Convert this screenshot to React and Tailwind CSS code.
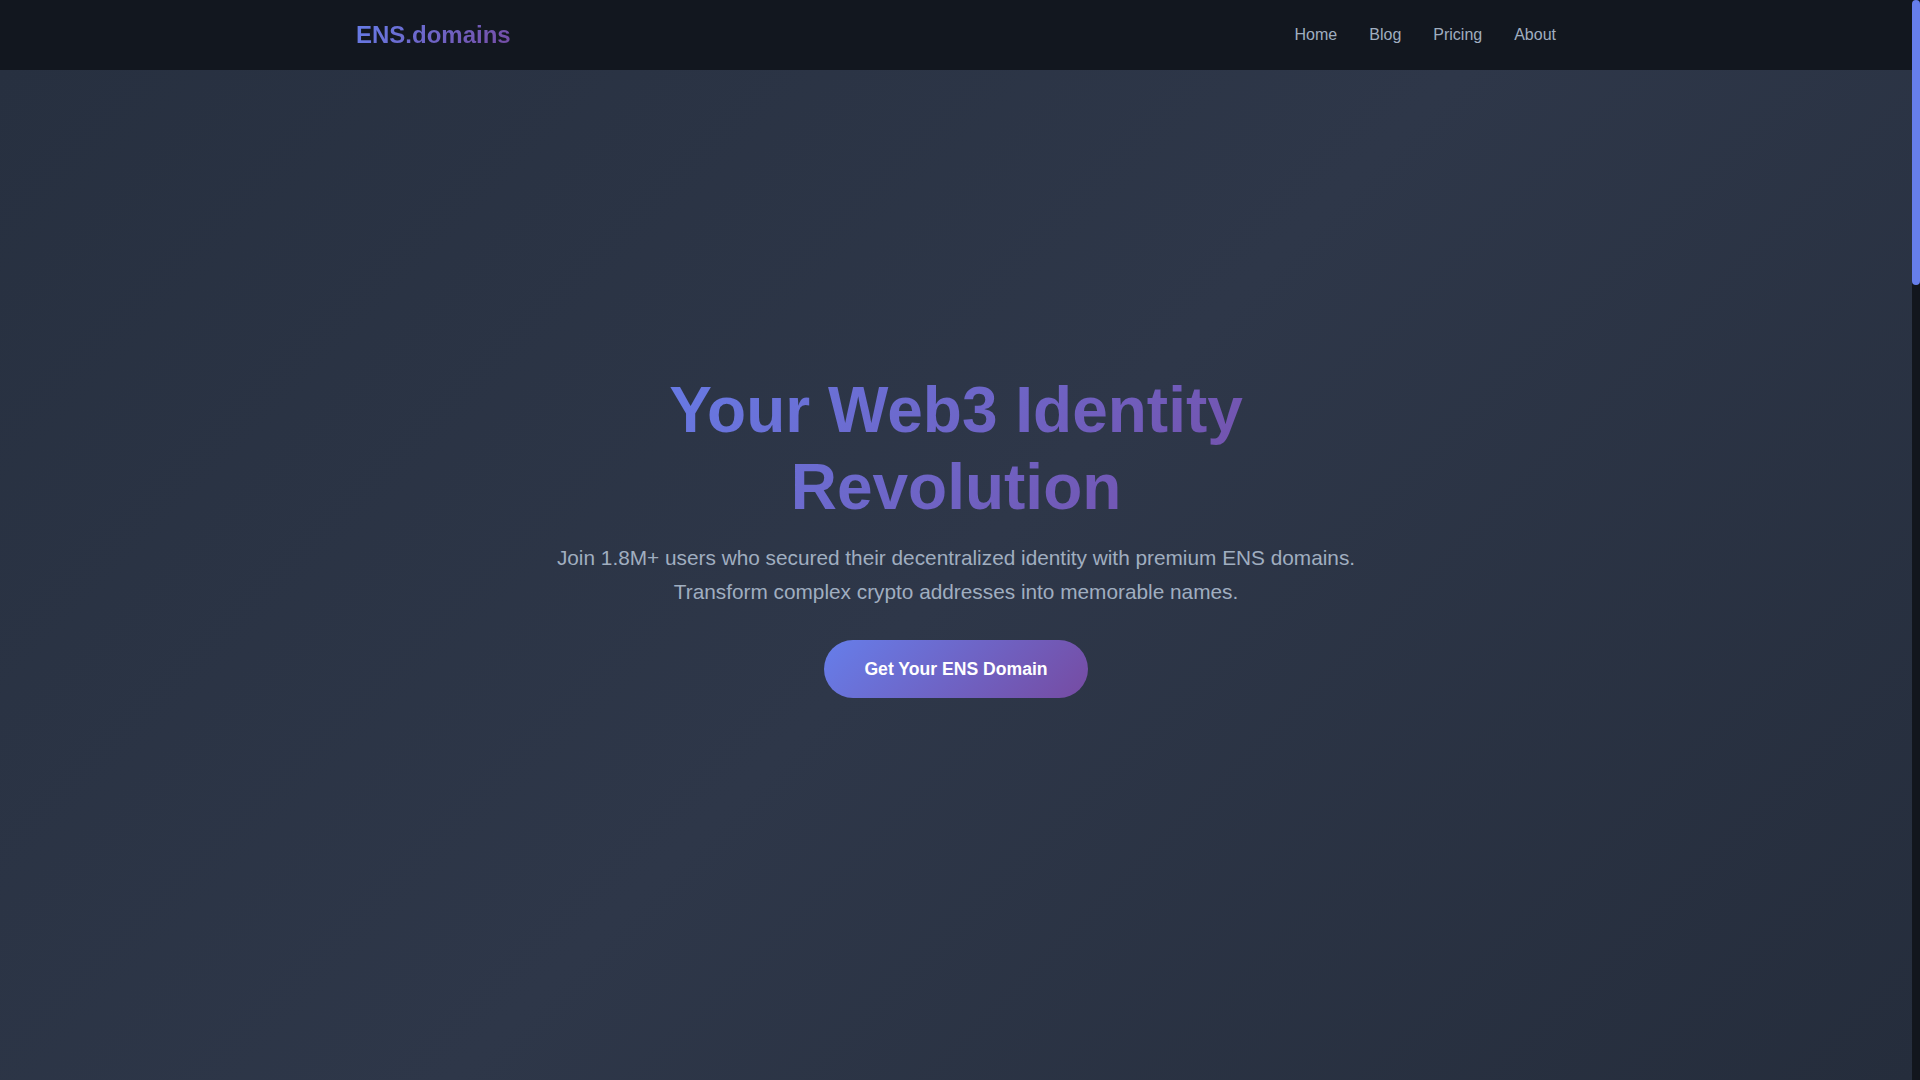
export default function App() {
  return (
    <div className="flex h-screen overflow-hidden bg-[#1a202c] font-['Liberation_Sans',Arial,sans-serif]">
      <div className="min-w-0 flex-1">
        <header className="h-[70px] bg-[#12171f]">
          <div className="mx-auto flex h-full max-w-[1200px] items-center justify-between">
            <a className="bg-[linear-gradient(135deg,#667eea_0%,#764ba2_100%)] bg-clip-text text-2xl font-bold text-transparent">
              ENS.domains
            </a>
            <nav className="flex items-center gap-8 text-base text-[#a0aec0]">
              <a>Home</a>
              <a>Blog</a>
              <a>Pricing</a>
              <a>About</a>
            </nav>
          </div>
        </header>
        <section className="flex min-h-[1010px] items-center justify-center bg-[linear-gradient(135deg,#273040_0%,#2e3749_50%,#252d3c_100%)] pb-20">
          <div className="flex flex-col items-center text-center">
            <h1 className="mx-auto mb-4 max-w-[700px] bg-[linear-gradient(135deg,#667eea_0%,#764ba2_100%)] bg-clip-text text-[64px] leading-[1.2] font-bold text-transparent">
              Your Web3 Identity Revolution
            </h1>
            <p className="mx-auto mb-8 max-w-[840px] text-[1.3rem] leading-[1.6] text-[#a0aec0]">
              Join 1.8M+ users who secured their decentralized identity with premium ENS domains. Transform complex crypto addresses into memorable names.
            </p>
            <button className="rounded-full bg-[linear-gradient(135deg,#667eea_0%,#764ba2_100%)] px-10 py-4 text-[1.1rem] leading-[1.5] font-bold text-white">
              Get Your ENS Domain
            </button>
          </div>
        </section>
      </div>
      <div className="w-2 shrink-0 bg-[#12161d]">
        <div className="h-[285px] rounded bg-[#667eea]"></div>
      </div>
    </div>
  );
}
